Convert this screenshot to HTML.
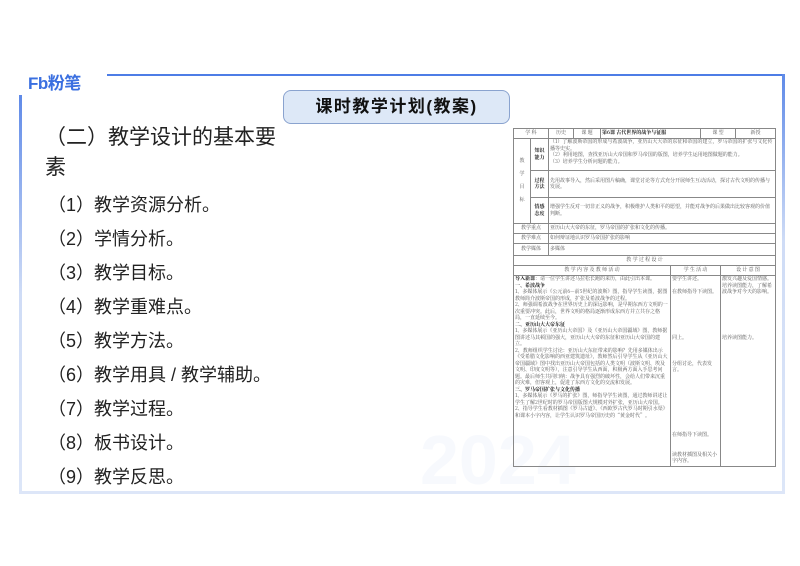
<!DOCTYPE html>
<html><head><meta charset="utf-8"><style>
*{margin:0;padding:0;box-sizing:border-box}
body{width:800px;height:566px;background:#fff;position:relative;overflow:hidden;font-family:"Liberation Sans","Noto Sans CJK SC",sans-serif;color:#222}
.logo{position:absolute;left:28px;top:69px;font-weight:bold;color:#3a6fe0;font-size:17px;letter-spacing:-0.5px}
.topline{position:absolute;left:107px;top:74px;width:677px;height:2px;background:#4d7de6}
.rb{position:absolute;left:782px;top:74px;width:3px;height:420px;background:linear-gradient(#5f8ae8,#cfdcf6 40%,#dde6f8)}
.lb{position:absolute;left:19px;top:95px;width:3px;height:399px;background:linear-gradient(#5f8ae8,#cfdcf6 50%,#dde6f8)}
.bb{position:absolute;left:19px;top:491px;width:766px;height:3px;background:#dde6f8}
.title{position:absolute;left:283px;top:90px;width:227px;height:34px;background:#dde8f7;border:1px solid #8aa3cf;border-radius:8px;text-align:center;line-height:32px;font-weight:bold;font-size:17px;letter-spacing:1.5px;color:#111}
.h{position:absolute;left:45px;font-size:21px;color:#222}
.it{position:absolute;left:48px;font-size:18px;color:#222}
table{position:absolute;left:513px;top:128px;width:262px;border-collapse:collapse;table-layout:fixed;font-size:5px;color:#555;font-family:"Noto Serif CJK SC",serif}
td{border:1px solid #888;padding:0 1px;vertical-align:top;line-height:6.5px;overflow:hidden}
.c{text-align:center;vertical-align:middle}
.b{color:#222;font-weight:bold}
.wm{position:absolute;left:420px;top:420px;font-size:70px;font-weight:bold;color:#f7f9fd}
</style></head><body>
<div class="logo">Fb粉笔</div>
<div class="topline"></div><div class="rb"></div><div class="lb"></div><div class="bb"></div>
<div class="wm">2024</div>
<div class="title">课时教学计划(教案)</div>
<div class="h" style="top:121px">（二）教学设计的基本要</div>
<div class="h" style="top:151px">素</div>
<div class="it" style="top:191px">（1）教学资源分析。</div>
<div class="it" style="top:225px">（2）学情分析。</div>
<div class="it" style="top:259px">（3）教学目标。</div>
<div class="it" style="top:293px">（4）教学重难点。</div>
<div class="it" style="top:327px">（5）教学方法。</div>
<div class="it" style="top:361px">（6）教学用具 / 教学辅助。</div>
<div class="it" style="top:395px">（7）教学过程。</div>
<div class="it" style="top:429px">（8）板书设计。</div>
<div class="it" style="top:463px">（9）教学反思。</div>
<table>
<colgroup><col style="width:17px"><col style="width:18px"><col style="width:25px"><col style="width:27px"><col style="width:70px"><col style="width:30px"><col style="width:20px"><col style="width:15px"><col style="width:40px"></colgroup>
<tr style="height:10px"><td class="c" colspan="2">学 科</td><td class="c">历史</td><td class="c">课 题</td><td colspan="2" class="b" style="vertical-align:middle">第6课 古代世界的战争与征服</td><td class="c" colspan="2">课 型</td><td class="c">新授</td></tr>
<tr style="height:32px"><td rowspan="3" class="c">教<br><br>学<br><br>目<br><br>标</td><td class="c b">知识<br>能力</td><td colspan="7">（1）了解波斯帝国的形成与希波战争，亚历山大大帝的东征和帝国的建立，罗马帝国的扩张与文化传播等史实。<br>（2）利用地图，查找亚历山大帝国和罗马帝国的版图，培养学生运用地图做题的能力。<br>（3）培养学生分析问题的能力。</td></tr>
<tr style="height:27px"><td class="c b">过程<br>方法</td><td colspan="7" style="vertical-align:middle">先用故事导入，然后采用图片稿确，课堂讨论等方式充分开展师生互动活动，探讨古代文明的传播与发展。</td></tr>
<tr style="height:26px"><td class="c b">情感<br>态度</td><td colspan="7" style="vertical-align:middle">增强学生反对一切非正义的战争，积极维护人类和平的愿望，并能对战争的后果做出比较客观的价值判断。</td></tr>
<tr style="height:10px"><td class="c" colspan="2">教学重点</td><td colspan="7" style="vertical-align:middle">亚历山大大帝的东征，罗马帝国的扩张和文化的传播。</td></tr>
<tr style="height:10px"><td class="c" colspan="2">教学难点</td><td colspan="7" style="vertical-align:middle">如何辩证地认识罗马帝国扩张的影响</td></tr>
<tr style="height:12px"><td class="c" colspan="2">教学媒体</td><td colspan="7" style="vertical-align:middle">多媒体</td></tr>
<tr style="height:10px"><td class="c" colspan="9">教 学 过 程 设 计</td></tr>
<tr style="height:10px"><td class="c" colspan="5">教 学 内 容 及 教 师 活 动</td><td class="c" colspan="2">学 生 活 动</td><td class="c" colspan="2">设 计 意 图</td></tr>
<tr style="height:191px"><td colspan="5"><b class="b">导入新课</b>：请一位学生讲述马拉松长跑的来历，由此引出本课。<br><b class="b">一、希波战争</b><br>1、多媒体展示《公元前6—前5世纪的波斯》图，指导学生读图，据图教师简介波斯帝国的形成，扩张及希波战争的过程。<br>2、师强调希波战争在世界历史上的深远影响，是早期东西方文明的一次重要冲突。此后，世界文明的格局逐渐形成东西方并立共存之格局，一直延续至今。<br><b class="b">二、亚历山大大帝东征</b><br>1、多媒体展示《亚历山大帝国》及《亚历山大帝国疆域》图，教师据图讲述马其顿国的强大，亚历山大大帝的东征和亚历山大帝国的建立。<br>2、教师组织学生讨论：亚历山大东征带来的影响？先用多媒体出示《受希腊文化影响的西亚建筑遗址》，教师然后引导学生从《亚历山大帝国疆域》图中找出亚历山大帝国包括的人类文明（波斯文明、埃及文明、印度文明等），注意引导学生从西面，积极两方面入手思考问题。最后师生共同归纳：战争具有强烈的破坏性，会给人们带来沉重的灾难，但客观上，促进了东西方文化的交流和发展。<br><b class="b">三、罗马帝国扩张与文化传播</b><br>1、多媒体展示《罗马的扩张》图，师指导学生读图，通过教师讲述让学生了解2世纪时的罗马帝国版图大规模对外扩张，亚历山大帝国。<br>2、指导学生看教材插图《罗马古道》、《西欧罗古代罗马时期引水渠》和课本小字内容，让学生认识罗马帝国历史的“黄金时代”。</td>
<td colspan="2">要学生讲述。<br><br>在教师指导下读图。<br><br><br><br><br><br><br>同上。<br><br><br><br>分组讨论，代表发言。<br><br><br><br><br><br><br><br><br><br>在师指导下读图。<br><br><br>读教材插图及相关小字内容。</td>
<td colspan="2">激发兴趣及爱国情感。<br>培养读图能力，了解希波战争对今天的影响。<br><br><br><br><br><br><br>培养读图能力。</td></tr>
</table>
</body></html>
